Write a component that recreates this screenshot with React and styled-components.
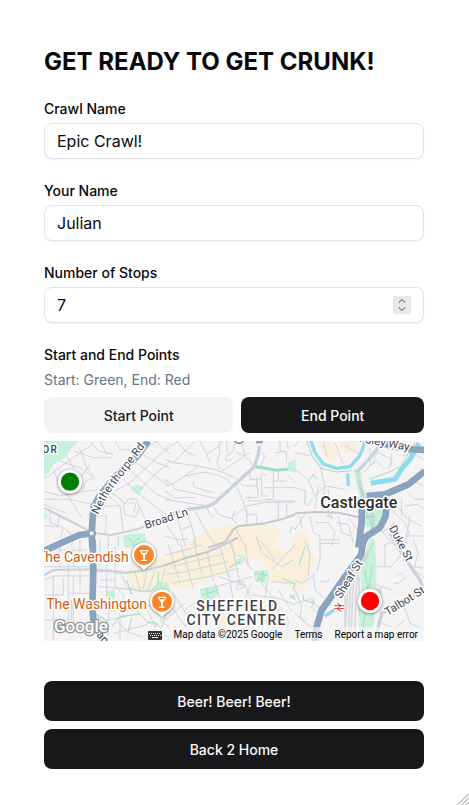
import { useState } from "react";
import styled, { createGlobalStyle } from "styled-components";

const GlobalStyle = createGlobalStyle`
  *, *::before, *::after {
    box-sizing: border-box;
  }

  body {
    margin: 0;
    color: #09090b;
    background-color: white;
    font-family: Inter, "Liberation Sans", sans-serif;
  }
`;

export default function App() {
  const [stops, setStops] = useState(7);

  return (
    <Page>
      <GlobalStyle />
      <Title>GET READY TO GET CRUNK!</Title>
      <Form onSubmit={(e) => e.preventDefault()}>
        <Field>
          <Label htmlFor="crawl-name">Crawl Name</Label>
          <Input id="crawl-name" type="text" defaultValue="Epic Crawl!" />
        </Field>
        <Field>
          <Label htmlFor="your-name">Your Name</Label>
          <Input id="your-name" type="text" defaultValue="Julian" />
        </Field>
        <Field>
          <Label htmlFor="stops">Number of Stops</Label>
          <NumberBox>
            <NumberInput id="stops" type="number" value={stops} onChange={(e) => setStops(Number(e.target.value))} />
            <Spinner>
              <Step type="button" aria-label="More stops" onClick={() => setStops(stops + 1)}>
                <svg width="18" height="9" viewBox="0 0 18 9">
                  <path d="M5.7 6.5L9 3.7l3.3 2.8" />
                </svg>
              </Step>
              <Step type="button" aria-label="Fewer stops" onClick={() => setStops(stops - 1)}>
                <svg width="18" height="9" viewBox="0 0 18 9">
                  <path d="M5.7 2.5L9 5.3l3.3-2.8" />
                </svg>
              </Step>
            </Spinner>
          </NumberBox>
        </Field>
        <Field as="section" aria-labelledby="points">
          <Label as="h2" id="points">
            Start and End Points
          </Label>
          <Hint>Start: Green, End: Red</Hint>
          <Points>
            <Button type="button" $light $grow>
              Start Point
            </Button>
            <Button type="button" $grow>
              End Point
            </Button>
          </Points>
          <MapFrame>
            <CityMap />
            <MapBar>
              <KeyboardButton type="button" aria-label="Keyboard shortcuts">
                <KeyboardIcon />
              </KeyboardButton>
              <span>Map data ©2025 Google</span>
              <a href="#terms">Terms</a>
              <a href="#report">Report a map error</a>
            </MapBar>
          </MapFrame>
        </Field>
        <Actions>
          <Button type="submit" $tall>
            Beer! Beer! Beer!
          </Button>
          <Button type="button" $tall>
            Back 2 Home
          </Button>
        </Actions>
      </Form>
      <Grip width="12" height="12" viewBox="0 0 12 12" aria-hidden="true">
        <path d="M0.5 12L12 0.5M4.5 12L12 4.5M8.5 12L12 8.5" />
      </Grip>
    </Page>
  );
}

// Each district is drawn in its own coordinates and moved into place by `at`.
const districts = [
  {
    at: "0 0",
    park: "M12 15H116L95 35 78 62 58 75 40 85 30 105 12 125ZM272 158L290 145 312 155 295 178ZM12 225L25 240 20 250 12 250ZM248 298L315 290 320 335H254Z",
    sand: "M258 405L330 375 410 348 460 310 500 280 580 266 600 285 655 335 640 372 590 385 560 415 500 430 450 458 400 450 350 475 282 468ZM588 270L700 268 722 285 705 330 745 350 765 300 790 283 808 300 810 350 832 370 805 400 800 450 775 470 735 445 682 432 700 405 655 370 640 330Z",
    trail: "M210 165L248 195 258 205M262 305L280 320 300 305M280 320V335",
    minor:
      "M12 130L50 102 95 68 150 30 165 15M12 165L60 180 120 168 175 162M12 190L90 190 155 205M40 100L60 150 90 190 125 245M60 75L130 100 165 130M80 60L100 95M100 45L160 65 215 65M120 40L140 95 160 120M105 165L120 130 150 85M130 160L138 135 158 128M150 15L175 45 220 55M180 15L200 55M225 15L240 40 290 45M12 205L75 230M30 215V260L70 275 60 305M70 275L100 300 95 330M12 270H60M60 240L50 275M175 210H240L250 285M195 170L240 210M165 240H200L195 295M240 120L280 160 330 200 390 245M260 95L300 130 350 175 390 190M280 75L345 120 390 150M300 50L350 80 390 95M320 35L355 15M345 15L390 55M390 25L340 75 270 140 225 165M390 75L330 130 300 160M250 210L265 190 290 188 298 215 285 245 255 235ZM265 205L275 198 287 205 282 230M300 215L320 260M205 300V330M235 300V330",
    street: "M12 215L60 240 120 270 155 290 215 297 290 280 375 250",
    arterial: "M325 15L290 62 230 118 180 178 160 215 155 292 157 335M155 292L118 297 70 318 12 345",
  },
  {
    at: "375 0",
    park: "M370 80L392 68V110L365 103Z",
    trail: "M272 92L300 97 335 103 370 100",
    wideTrail: true,
    minor:
      "M0 70L25 80 100 90 155 102 210 125 235 150M0 45L40 15M25 80L70 35 90 15M35 15L60 45 90 60M100 90L60 120 20 145 0 150M60 120L120 108 180 125 215 155M20 145L30 160 100 175 165 190M0 130L20 145M85 135V152L110 160 145 170M0 190L60 200 120 208M0 165L30 185 90 185M105 15L125 55 135 80M125 55L165 30 170 15M160 15L165 50 155 80 165 100M185 15V45L195 55M210 15L205 45 180 65 185 75 200 70M215 50L240 60 265 88M230 15L240 60M170 105L210 80 255 50M290 50L300 60 285 95M345 15V50H330M345 45L365 48V80M365 15L370 40M215 155L230 185 250 245M235 150H275L280 165M255 105V130H290M275 125L280 185H240M300 120A6 6 0 1 0 290 123V180H310M325 105V190M325 135H365M340 105V130M300 155H390M370 120L390 140M325 190H300M255 180L250 195 390 195M340 195V255M200 245L245 210 300 200 390 198M215 265L200 245 210 225M245 220V270M275 240V265M245 235H275M125 215L140 245 150 238M145 210L160 235 205 250M90 225L125 290 150 325M65 230L80 270 95 330M35 240L50 290 60 330M0 260L35 310 40 330M50 280L80 270M0 300L35 310 70 310M210 275L240 330M365 205V240H390",
    trunk: "M283 30L280 55 268 92 210 145 150 200 125 212 60 222 0 242",
    street: "M130 335L180 318 205 280 220 270 300 262 350 250 390 235",
    grey: true,
    arterial: "M283 10V22",
  },
  {
    at: "765 0",
    park: "M175 95L200 110 200 140 215 180 200 200 185 150ZM203 220L235 210 272 222 262 255 238 282 205 270ZM225 300L240 312 228 335H215ZM12 0H45L50 20 35 15Z",
    trail:
      "M35 15L52 60 80 98 125 108 170 104M222 130L290 105 318 90 360 20M45 130L55 115 65 130M30 165V205M95 240H110V250M180 100L195 125M190 185L220 240 240 300",
    sand: "M75 15H110L135 60 110 85 90 60ZM125 15H195L180 45 150 55Z",
    water: "M48 15L60 50 85 84 125 97 165 92 190 65 203 40 208 15M158 112L160 150",
    wideWater: "M227 142L300 130 318 102 345 70 372 22",
    minor:
      "M0 50L50 60 75 90M0 100L40 130 60 180 35 210M75 90L90 150 80 230M60 180L90 150 150 160M0 155L35 165M100 160V235M10 15L0 30M85 20L95 60M120 20L145 85M150 30L200 60M225 35V90L245 75 265 95M240 45L290 70 280 100M290 50V90M205 110L235 80 245 50M0 280L30 235M45 240L55 290 75 300V330M60 260H100L120 290 110 330M130 240L140 290 165 300M125 260L160 265 175 320M160 245L190 285M285 220L330 260 345 300M300 205L340 250 380 270M320 190V240M340 170L360 190H385M330 210L370 205 385 220M350 130L385 150M260 290L300 260M345 240L330 330M240 265L300 330M330 300H385M15 240L20 275M70 150L60 220M320 60L350 50 385 70",
    street: "M0 232L60 228 130 230 200 245 240 240",
    grey: true,
    trunk: "M185 110L230 60 265 15M190 130L210 200 235 240 230 300",
    arterial: "M200 0L290 30 350 40 390 42M390 105L340 145 270 175 215 180M200 185V260L190 335M275 185L272 240 255 275 215 300 195 335",
  },
  {
    at: "0 312",
    park: "M265 0H322L300 18 280 25 265 15ZM200 152L225 150V215H205ZM255 265L270 230ZM335 145L355 125 385 130 390 160 345 165Z",
    trail: "M165 185H200L215 205M260 120L275 165M355 95V135L330 155M215 260L240 230 300 222 320 245 350 250 390 300M265 275L275 235M350 250L335 300M190 250L170 225M180 230L200 245 205 265",
    minor:
      "M12 120L40 108H150M40 108V300M12 165H70V115M85 70V240M85 160H150M60 200H150M12 240H95V180M100 110V260M120 90V150M12 80H150M60 20V85M100 30V80M30 30H140M120 0V40M180 0V80M205 0L200 90M225 20V140L250 165 250 230M180 120H225M175 140L240 145 330 155M200 100V170M225 100L300 95M240 90L260 140 300 155 330 150M165 95H230M285 95L300 150M320 95L310 145M345 90L325 150M375 85L360 140M300 225L280 190 310 180 330 200M230 240L260 275 330 300M165 220L200 240 260 230M250 190L300 200M220 280L300 260 340 245M320 205L345 260 330 290M240 180V300M360 240L390 265M380 220L350 300M205 215V290",
    street: "M12 105L40 90 150 88 210 92 260 98 330 88 390 72",
    arterial: "M158 0L160 90 157 200 160 240 190 310",
  },
  {
    at: "375 312",
    park: "M105 150L160 138V165L130 185 108 178ZM208 58L235 52V70L220 75ZM265 92L310 90 300 130 270 122ZM0 120L10 140 0 145ZM370 170L390 162V180Z",
    trail: "M190 85L225 65M112 165L160 150M125 145L130 178M268 100L305 105 275 125 295 95 290 130M275 -10L280 10 290 30M375 165L390 180M350 115L390 130 385 150",
    sand: "M160 250L172 205 195 205 215 240 190 270Z",
    minor:
      "M10 15L45 130M45 5L85 145M85 0L110 100M0 45L60 30 110 15M125 30L145 125M165 20L190 110M200 10L225 130M0 105L60 95 190 65M15 80L100 60 180 40M20 130L130 110 220 85M105 150L190 130 260 110M190 0L210 45 235 50 260 90M240 10L250 80M150 130L165 180M190 100L205 180M205 125H235V135H215V150L240 140M160 110L240 135 260 180M260 130L240 175M290 130L330 180 345 230M310 100L300 175M285 35L350 80 385 60M320 90L390 15M285 0L330 60M320 125L390 130M340 150L380 215M260 165L340 175 390 195M0 170L40 230 90 300M25 160L75 240M60 190L0 240M100 180L60 210M70 240L40 300M345 200L370 240 365 300M375 -20L380 -40 395 -30",
    street: "M0 75L60 55 130 35 190 8 220 -8",
    grey: true,
  },
  {
    at: "765 312",
    park: "M195 70L215 30 240 0 244 90V180L235 260 190 295 200 160Z",
    trail: "M235 10L200 75M210 215L200 290M232 75L222 145M210 90L218 150M25 165V180L60 190M12 75L30 20",
    minor:
      "M75 10H135M75 10V55L65 95M80 0H135M75 125H100V115M0 120L20 130 60 105M55 100L60 150 110 195M30 0L45 40 40 110M0 190L50 175 60 195 90 210M20 200L15 230 45 260 65 265M0 150L20 200M0 220L45 260M55 175L50 205 75 225M245 80H290L320 40M265 15L300 5 330 0M305 105L320 100 330 115 310 130H295M245 135L290 150M270 80V15M355 0L370 40 355 90 385 110M325 190L345 250 390 270M340 175L320 190M260 250L300 265 330 240M245 280H310M385 85L360 80",
    rail: "M205 25L165 85 158 150 150 280M210 35L172 95 165 160 160 290M218 35L180 95 173 160 168 300M222 45L188 100 182 170 180 300M192 110V230M150 110V270",
    trunk: "M245 280L260 220 300 198 390 145M285 -20L330 55 375 120 395 175",
    arterial: "M206 -5L198 45 150 110 105 175 80 210 65 260 58 312",
    water: "M90 228L125 205",
  },
];

const layers = [
  { key: "sand", fill: "#f9efda" },
  { key: "park", fill: "#c8f1db" },
  { key: "minor", stroke: "#ccd7e0", strokeWidth: 3 },
  { key: "rail", stroke: "#d7d9dd", strokeWidth: 5 },
  { key: "trail", stroke: "#9ce0be", strokeWidth: 3 },
  { key: "water", stroke: "#8fdcee", strokeWidth: 10 },
  { key: "wideWater", stroke: "#8fdcee", strokeWidth: 15 },
  { key: "street", stroke: "#c9d2da", strokeWidth: 6 },
  { key: "trunk", stroke: "#c8d3dc", strokeWidth: 10 },
  { key: "arterial", stroke: "#8aa4c0", strokeWidth: 20 },
];

function CityMap() {
  return (
    <MapArt viewBox="12 15 1140 600" preserveAspectRatio="xMidYMid slice" role="img" aria-label="Map of Sheffield">
      <rect x="12" y="15" width="1140" height="600" fill="#f5f3f4" />
      {layers.map(({ key, fill = "none", ...line }) => (
        <g key={key} fill={fill} strokeLinejoin="round" {...line}>
          {districts
            .filter((district) => district[key])
            .map((district) => (
              <path
                key={district.at}
                d={district[key]}
                transform={`translate(${district.at})`}
                stroke={key === "street" && district.grey ? "#c5c8ce" : line.stroke}
                strokeWidth={key === "trail" && district.wideTrail ? 9 : line.strokeWidth}
              />
            ))}
        </g>
      ))}
      <circle cx="155" cy="292" r="10" fill="#f5f3f4" stroke="#8aa4c0" strokeWidth="7" />
      <circle cx="597" cy="8" r="14" fill="#f5f3f4" stroke="#8b8f92" strokeWidth="5" />
      <path d="M1005 457h20v50h-20z" fill="#dcdddf" />

      <defs>
        <path id="netherthorpe" d="M174 236Q202 172 250 117L335 5" />
      </defs>
      <Street>
        <textPath href="#netherthorpe">Netherthorpe Rd</textPath>
      </Street>
      <Street transform="translate(318 279) rotate(-18)">Broad Ln</Street>
      <Street transform="translate(1106 44) rotate(10)" textAnchor="end">
        Foley Way
      </Street>
      <Street transform="translate(1046 276) rotate(62)">Duke St</Street>
      <Street transform="translate(903 490) rotate(-59)">Sheaf St</Street>
      <Street transform="translate(1043 540) rotate(-32)">Talbot St</Street>
      <Street transform="translate(168 598) rotate(48)">an</Street>
      <Area x="7" y="52" $small>
        OR
      </Area>
      <Place x="841" y="215">
        Castlegate
      </Place>
      <Area x="592" y="525" textAnchor="middle">
        SHEFFIELD
      </Area>
      <Area x="590" y="567" textAnchor="middle">
        CITY CENTRE
      </Area>
      <Venue x="266" y="378">
        The Cavendish
      </Venue>
      <Venue x="321" y="519">
        The Washington
      </Venue>
      <BarPin x={312} y={357} />
      <BarPin x={366} y={497} />

      <g transform="translate(898 513)">
        <circle r="17" fill="white" />
        <path d="M-15 -4H15M-15 5H15M-7 -12L5 -4 -6 5 6 13" fill="none" stroke="#e8303a" strokeWidth="3" />
      </g>
      <Marker x={90} y={137} color="#008000" />
      <Marker x={990} y={495} color="#ff0000" />
      <Logo x="42" y="589">
        Google
      </Logo>
    </MapArt>
  );
}

function BarPin({ x, y }) {
  return (
    <Shadowed transform={`translate(${x} ${y})`}>
      <path d="M0 47C-5 37 -15 34 -25 25A36 36 0 1 1 25 25C15 34 5 37 0 47Z" fill="white" />
      <circle r="30" fill="#fb8526" />
      <path d="M-14 -15H14L9 -5 3 2V15H9V18H-9V15H-3V2L-9 -5ZM-8 -11L-6 -7H6L8 -11Z" fill="white" fillRule="evenodd" />
    </Shadowed>
  );
}

function Marker({ x, y, color }) {
  return (
    <Shadowed transform={`translate(${x} ${y})`}>
      <circle r="32" fill={color} stroke="white" strokeWidth="9" />
    </Shadowed>
  );
}

function KeyboardIcon() {
  return (
    <svg width="14" height="9" viewBox="0 0 14 9" aria-hidden="true">
      <rect width="14" height="9" rx="1" fill="#333" />
      <path d="M1 2.5H13M2 4.5H13" stroke="white" strokeWidth="1" strokeDasharray="1 1" />
      <path d="M4 6.5H10" stroke="white" strokeWidth="1" />
    </svg>
  );
}

const Page = styled.main`
  position: relative;
  min-height: 100vh;
  padding: 46px 45px 36px 44px;
`;

const Title = styled.h1`
  margin: 0 0 23px;
  font-size: 24px;
  font-weight: 700;
  line-height: 32px;
`;

const Form = styled.form`
  gap: 24px;
  display: flex;
  flex-direction: column;
`;

const Field = styled.div`
  gap: 6px;
  display: flex;
  flex-direction: column;
`;

const Label = styled.label`
  margin: 0;
  font-size: 14px;
  font-weight: 500;
  line-height: 16px;
`;

const Input = styled.input`
  width: 100%;
  height: 36px;
  color: inherit;
  font-size: 16px;
  padding: 4px 12px;
  border-radius: 8px;
  font-family: inherit;
  background-color: white;
  border: 1px solid #e4e4e7;
  box-shadow: 0 1px 2px rgba(0, 0, 0, 0.05);
`;

const NumberBox = styled.div`
  position: relative;
`;

const NumberInput = styled(Input)`
  appearance: textfield;

  &::-webkit-inner-spin-button {
    display: none;
  }
`;

const Spinner = styled.div`
  top: 9px;
  right: 13px;
  display: flex;
  position: absolute;
  flex-direction: column;
`;

const Step = styled.button`
  width: 18px;
  height: 9px;
  padding: 0;
  border: none;
  display: flex;
  background-color: #e9e9ed;

  path {
    fill: none;
    stroke: #8f8f9d;
    stroke-width: 1.5;
  }
`;

const Hint = styled.p`
  margin: 0;
  color: #64748b;
  font-size: 14px;
  line-height: 22px;
`;

const Points = styled.div`
  gap: 8px;
  display: flex;
  margin-bottom: 2px;
`;

const Button = styled.button`
  border: none;
  padding: 0 16px;
  font-size: 14px;
  font-weight: 500;
  cursor: pointer;
  border-radius: 8px;
  font-family: inherit;
  flex-grow: ${(props) => (props.$grow ? 1 : 0)};
  height: ${(props) => (props.$tall ? "40px" : "36px")};
  color: ${(props) => (props.$light ? "#18181b" : "#fafafa")};
  background-color: ${(props) => (props.$light ? "#f4f4f5" : "#18181b")};
`;

const Actions = styled.div`
  gap: 8px;
  display: flex;
  margin-top: 16px;
  flex-direction: column;
`;

const Grip = styled.svg`
  right: 0;
  bottom: 0;
  position: absolute;
  stroke: #8c8c8c;
`;

const MapFrame = styled.div`
  height: 200px;
  overflow: hidden;
  position: relative;
`;

const MapArt = styled.svg`
  width: 100%;
  height: 100%;
  display: block;
`;

const MapBar = styled.div`
  right: 0;
  bottom: 0;
  gap: 12px;
  height: 14px;
  display: flex;
  color: black;
  font-size: 10px;
  line-height: 12px;
  position: absolute;
  align-items: center;
  white-space: nowrap;
  padding: 2px 6px 0;
  font-family: Roboto, sans-serif;
  background-color: rgba(245, 245, 245, 0.7);

  a {
    color: inherit;
    text-decoration: none;
  }
`;

const KeyboardButton = styled.button`
  padding: 0;
  border: none;
  display: flex;
  background: none;
`;

const MapText = styled.text`
  stroke: white;
  stroke-width: 9px;
  paint-order: stroke;
  stroke-linejoin: round;
  font-family: Roboto, sans-serif;
`;

const Street = styled(MapText)`
  fill: #3c4658;
  font-size: 34px;
`;

const Place = styled(MapText)`
  fill: #2b2d31;
  font-size: 48px;
  font-weight: 500;
`;

const Area = styled(MapText)`
  fill: #3f4347;
  font-weight: 500;
  letter-spacing: 4px;
  font-size: ${(props) => (props.$small ? "30px" : "42px")};
`;

const Venue = styled(MapText)`
  fill: #d35d0d;
  font-size: 42px;
  text-anchor: end;
`;

const Logo = styled(MapText)`
  fill: white;
  stroke: #94979b;
  font-size: 51px;
  font-weight: 500;
  stroke-width: 8px;
`;

const Shadowed = styled.g`
  filter: drop-shadow(0 2px 4px rgba(0, 0, 0, 0.5));
`;
